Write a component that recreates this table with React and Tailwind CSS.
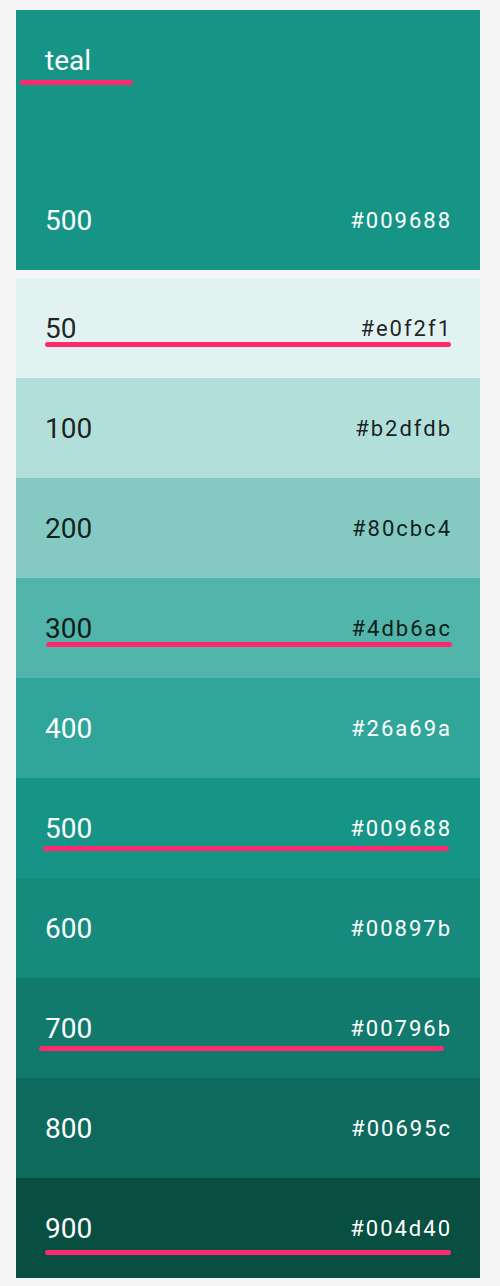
import React from 'react';

// teal palette swatches (colours as they show on the screen)
const shades = [
  { name: '50', hex: '#e0f2f1', bg: '#e1f2f1', dark: true },
  { name: '100', hex: '#b2dfdb', bg: '#b3dfdb', dark: true },
  { name: '200', hex: '#80cbc4', bg: '#84cac3', dark: true },
  { name: '300', hex: '#4db6ac', bg: '#52b5ab', dark: true },
  { name: '400', hex: '#26a69a', bg: '#30a59a' },
  { name: '500', hex: '#009688', bg: '#169587' },
  { name: '600', hex: '#00897b', bg: '#168a7d' },
  { name: '700', hex: '#00796b', bg: '#117a6c' },
  { name: '800', hex: '#00695c', bg: '#0d6a5d' },
  { name: '900', hex: '#004d40', bg: '#084e41' },
];

// hand-drawn pink marks over some rows
const marks = {
  '50': 'left-[29px] top-[64px] w-[406px]',
  '300': 'left-[30px] top-[64px] w-[406px]',
  '500': 'left-[27px] top-[68px] w-[406px]',
  '700': 'left-[23px] top-[68px] w-[405px]',
  '900': 'left-[29px] top-[72px] w-[406px]',
};

function Swatch({ shade }) {
  const text = shade.dark ? 'text-[rgba(0,0,0,0.87)]' : 'text-white';
  return (
    <div
      className={`relative h-[100px] flex items-center justify-between pl-[29px] pr-[28px] pt-[1px] ${text}`}
      style={{ backgroundColor: shade.bg }}
    >
      <span className="text-[28px] leading-none">{shade.name}</span>
      <span className="text-[22px] leading-none tracking-[2px]">{shade.hex}</span>
      {marks[shade.name] && (
        <div className={`absolute h-[5px] rounded-full bg-[#ff2a6d] ${marks[shade.name]}`} />
      )}
    </div>
  );
}

export default function App() {
  return (
    <div className="min-h-[1286px] bg-[#f5f5f5] pt-[10px] font-['Roboto',sans-serif]">
      <div className="ml-4 w-[464px]">
        {/* header block */}
        <div className="relative h-[260px] bg-[#169587] flex flex-col justify-between text-white">
          <div className="pl-[29px] pt-[37px] text-[28px] leading-none">teal</div>
          <div className="absolute left-[4px] top-[70px] h-[5px] w-[113px] rounded-full bg-[#ff2a6d]" />
          <div className="h-[100px] flex items-center justify-between pl-[29px] pr-[28px] pt-[1px]">
            <span className="text-[28px] leading-none">500</span>
            <span className="text-[22px] leading-none tracking-[2px]">#009688</span>
          </div>
        </div>

        <div className="mt-2">
          {shades.map(shade => (
            <Swatch key={shade.name} shade={shade} />
          ))}
        </div>
      </div>
    </div>
  );
}
